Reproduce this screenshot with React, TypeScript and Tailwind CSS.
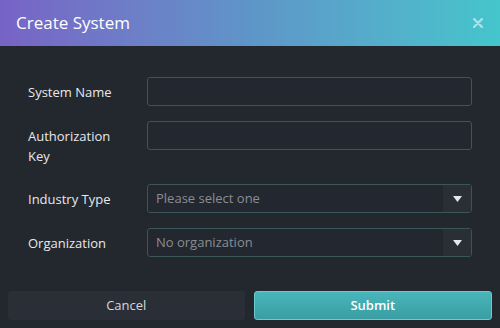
import React from 'react';

const font = { fontFamily: '"Segoe UI", "Open Sans", "Noto Sans", sans-serif' };

function TextField() {
  return (
    <input
      type="text"
      className="flex-1 h-[29px] rounded-[3px] border border-[#3b5558] bg-[#23272f] px-2 text-[13px] text-gray-200 outline-none"
    />
  );
}

function SelectField({ placeholder }: { placeholder: string }) {
  return (
    <div className="flex-1 h-[29px] flex rounded-[3px] border border-[#3b5558] bg-[#23272f] overflow-hidden">
      <div className="flex-1 flex items-center px-2 text-[13px] text-[#8a8e93]">{placeholder}</div>
      <div className="w-[28px] flex items-center justify-center bg-[#2a2e35]">
        <svg width="9" height="6" viewBox="0 0 9 6">
          <path d="M0 0 H9 L4.5 6 Z" fill="#e6e7e8" />
        </svg>
      </div>
    </div>
  );
}

function Row({ label, children }: { label: string; children: React.ReactNode }) {
  return (
    <div className="flex items-start">
      <label className="w-[119px] pr-3 pt-[5px] pb-[3px] text-[13px] leading-[20px] text-[#e8e9ea]">{label}</label>
      {children}
    </div>
  );
}

export default function App() {
  return (
    <div className="w-[500px] h-[328px] bg-[#23272e] flex flex-col" style={font}>
      {/* Header */}
      <div className="h-[46px] flex items-center justify-between pl-4 pr-[17px] bg-gradient-to-r from-[#7763c6] via-[#5e95c8] to-[#44c5cc]">
        <span className="text-[17px] text-white">Create System</span>
        <svg width="10" height="10" viewBox="0 0 10 10">
          <path d="M1 1 L9 9 M9 1 L1 9" stroke="#a6e4e7" strokeWidth="2.4" strokeLinecap="round" />
        </svg>
      </div>

      {/* Form */}
      <div className="flex flex-col gap-[15px] pl-[28px] pr-[28px] pt-[31px]">
        <Row label="System Name">
          <TextField />
        </Row>
        <Row label="Authorization Key">
          <TextField />
        </Row>
        <Row label="Industry Type">
          <SelectField placeholder="Please select one" />
        </Row>
        <Row label="Organization">
          <SelectField placeholder="No organization" />
        </Row>
      </div>

      {/* Footer */}
      <div className="mt-auto flex gap-[9px] px-[8px] pb-[8px]">
        <button className="flex-1 h-[29px] rounded-[3px] bg-[#2a2f37] text-[13px] text-[#d6d8da]">Cancel</button>
        <button className="flex-1 h-[29px] rounded-[3px] border border-[#6cc9cd] bg-gradient-to-b from-[#48b6bc] to-[#399ea2] text-[13px] font-semibold text-white">
          Submit
        </button>
      </div>
    </div>
  );
}
